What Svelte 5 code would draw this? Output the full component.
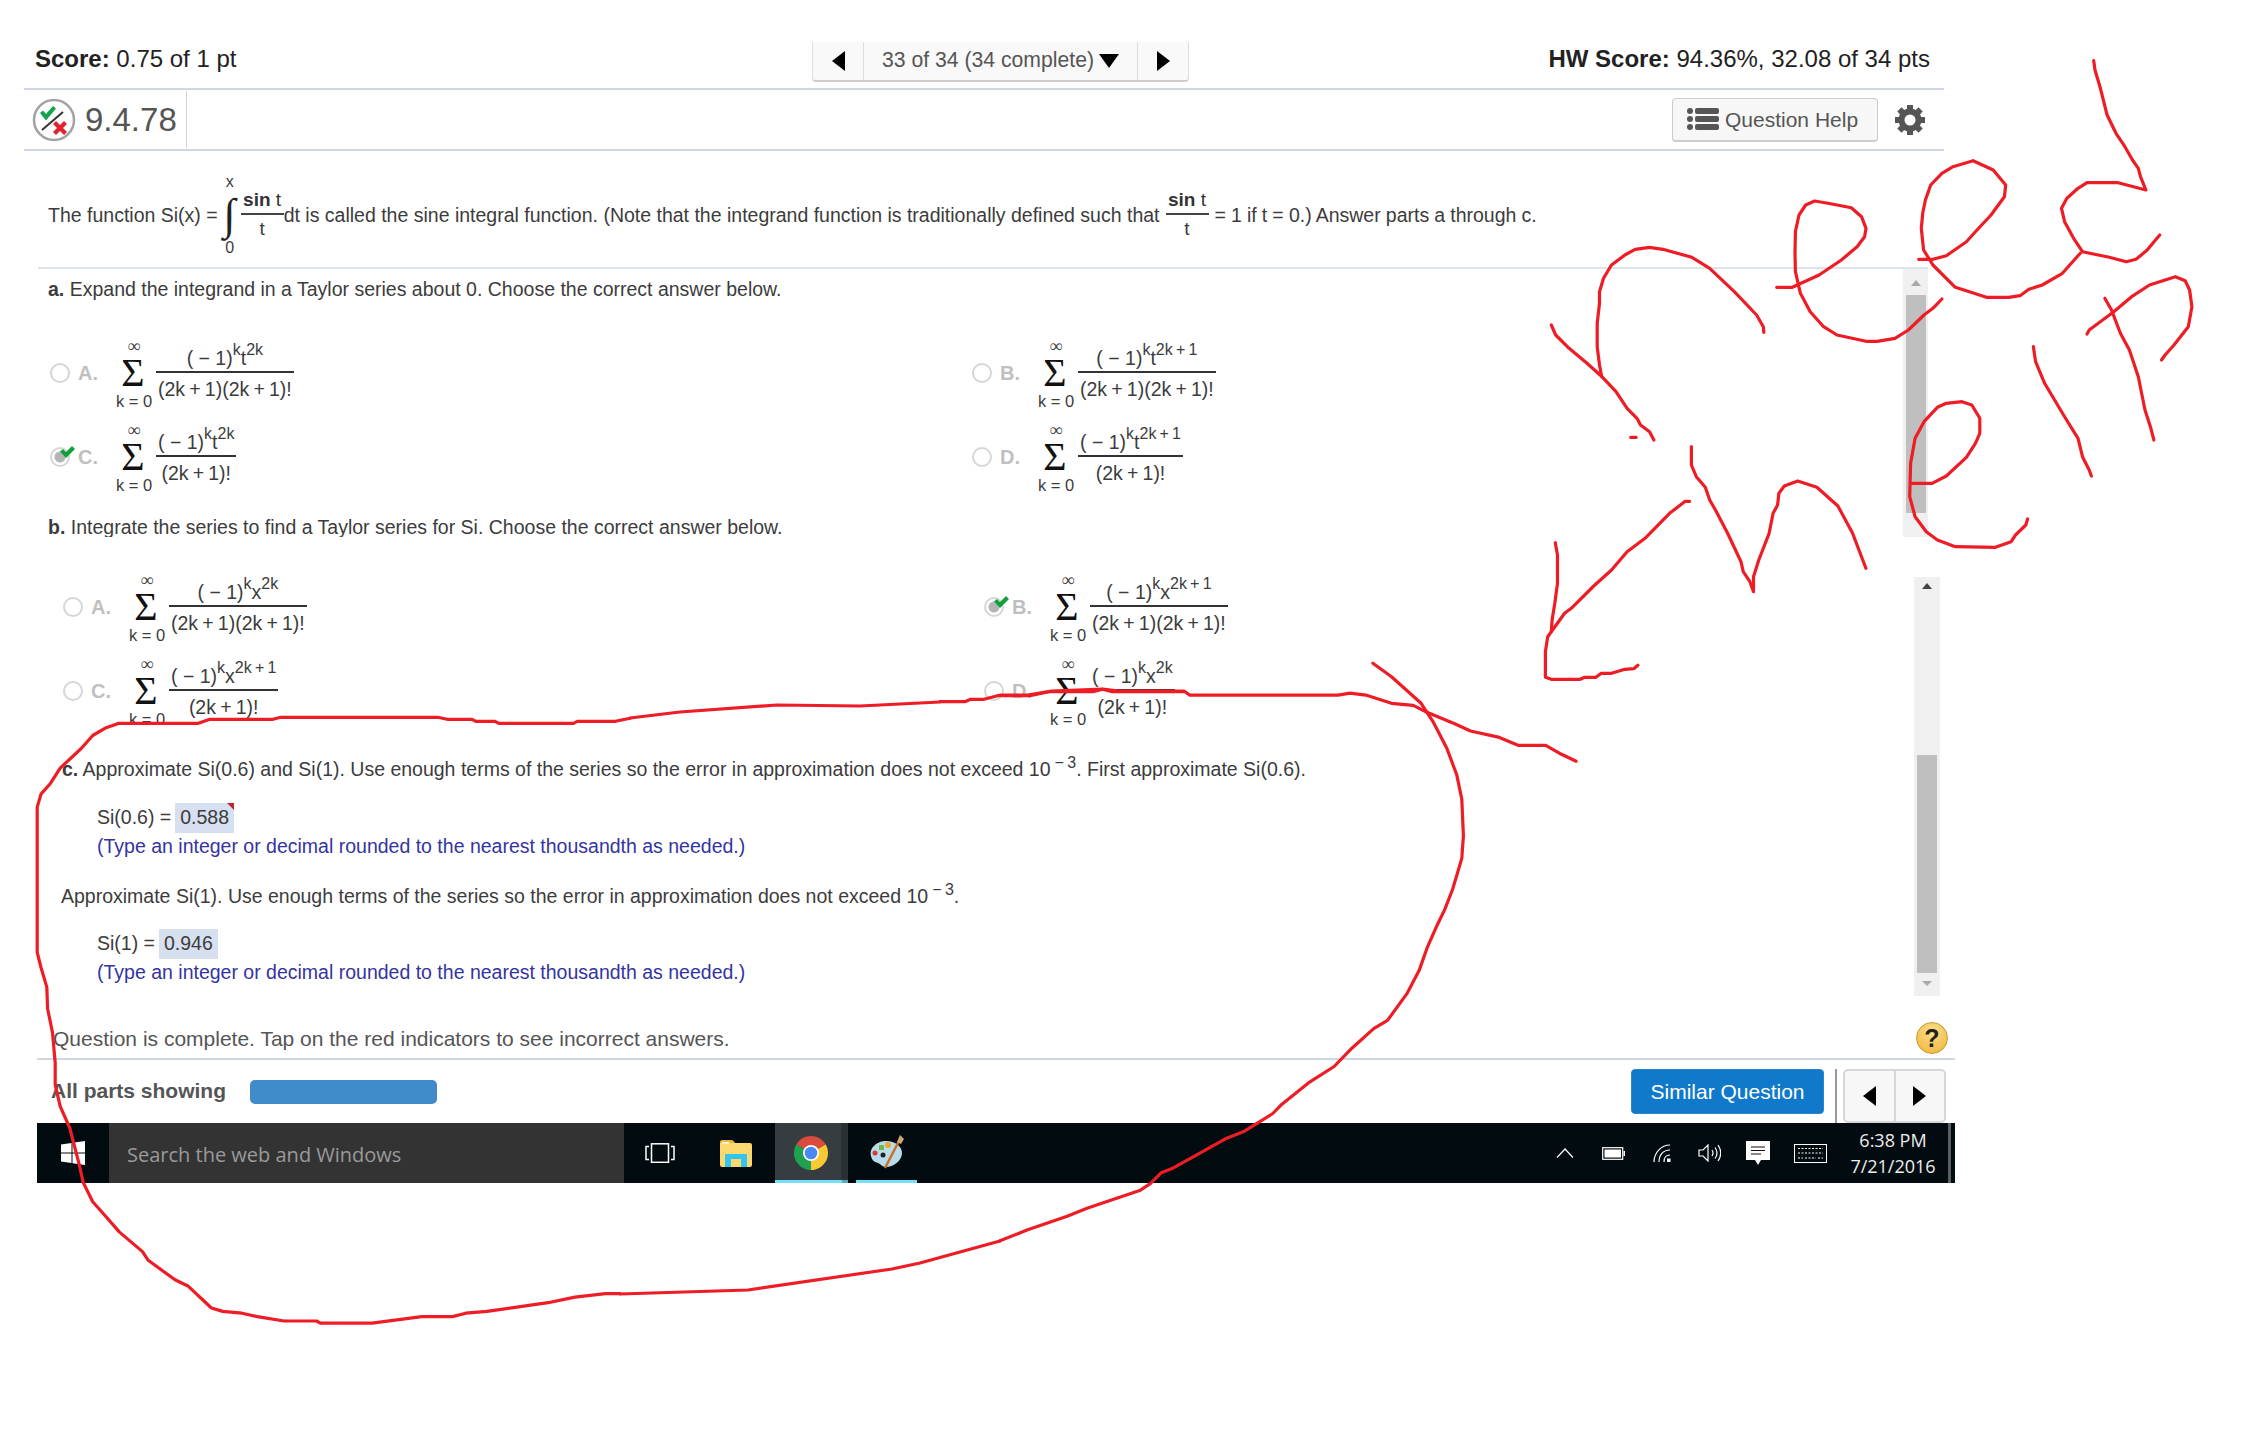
<script>
	const partA = [
		{ key: 'A.', base: 't', exp: '2k', den: '(2k + 1)(2k + 1)!' },
		{ key: 'B.', base: 't', exp: '2k + 1', den: '(2k + 1)(2k + 1)!' },
		{ key: 'C.', base: 't', exp: '2k', den: '(2k + 1)!', picked: true },
		{ key: 'D.', base: 't', exp: '2k + 1', den: '(2k + 1)!' }
	];
	const partB = [
		{ key: 'A.', base: 'x', exp: '2k', den: '(2k + 1)(2k + 1)!' },
		{ key: 'B.', base: 'x', exp: '2k + 1', den: '(2k + 1)(2k + 1)!', picked: true },
		{ key: 'C.', base: 'x', exp: '2k + 1', den: '(2k + 1)!' },
		{ key: 'D.', base: 'x', exp: '2k', den: '(2k + 1)!' }
	];

	// pen strokes, traced from crops: each group has its own origin and x/y scale
	const groups = [
		{
			o: [1520, 40, 2.24, 3],
			lines: [
				[[546,877],[545,860],[530,825],[480,755],[425,685],[385,652],[320,628],[290,622],[258,628],[235,645],[205,675],[187,715],[178,755],[178,790],[173,850],[173,920],[178,975],[183,1010]],
				[[70,855],[80,885],[110,925],[150,970],[185,1012],[215,1055],[240,1105],[262,1135],[270,1155],[290,1175],[300,1200]],
				[[248,1192],[260,1192]],
				[[575,742],[610,742],[670,705],[720,660],[755,620],[772,590],[775,565],[765,530],[742,503],[690,490],[660,483],[640,495],[625,525],[617,575],[616,640],[617,695],[628,760],[650,815],[680,860],[710,885],[775,904],[800,904],[840,895],[870,870],[905,825],[925,805],[945,777]],
				[[893,658],[925,658],[955,647],[1000,605],[1020,575],[1055,525],[1085,470],[1088,435],[1060,390],[1015,362],[970,380],[945,400],[920,435],[908,480],[902,520],[899,565],[904,630],[925,675],[975,742],[1045,772],[1095,772],[1120,767],[1140,748],[1170,735],[1215,700],[1235,670],[1255,640]],
				[[1285,62],[1288,90],[1300,145],[1315,225],[1335,280],[1355,320],[1372,360],[1385,385],[1390,410],[1402,450],[1340,428],[1270,428],[1250,445],[1225,475],[1213,505],[1220,545],[1240,595],[1260,635],[1320,652],[1358,665],[1380,658],[1405,630],[1433,585]],
				[[1270,882],[1275,870],[1330,815],[1370,770],[1410,735],[1468,710],[1490,722],[1500,750],[1505,800],[1497,860],[1465,915],[1445,945],[1437,960]],
				[[1310,775],[1325,810],[1345,880],[1365,930],[1385,1010],[1400,1110],[1412,1160],[1420,1200]],
				[[1150,920],[1155,965],[1175,1030],[1220,1130],[1250,1195],[1260,1250],[1275,1290],[1280,1308]]
			]
		},
		{
			o: [1520, 400, 2.24, 3],
			lines: [
				[[875,250],[923,250],[955,228],[1000,172],[1020,130],[1030,100],[1030,55],[1012,15],[990,5],[955,10],[935,22],[905,65],[885,115],[875,190],[873,290],[885,350],[910,395],[935,420],[975,440],[1065,442],[1100,425],[1110,405],[1133,375],[1137,357]],
				[[384,140],[384,195],[395,230],[415,262],[425,300],[440,335],[465,400],[495,485],[500,515],[515,545],[523,575],[523,530],[535,480],[558,400],[567,340],[577,315],[580,280],[592,258],[622,243],[665,262],[712,318],[745,400],[765,470],[775,505]],
				[[380,304],[370,304],[335,340],[280,415],[240,455],[205,510],[165,558],[115,625],[100,640],[70,695],[62,710],[57,755],[57,832],[70,838],[135,838],[145,832],[170,832],[182,820],[205,820],[235,808],[255,806],[264,796]],
				[[79,428],[84,465],[84,550],[78,610],[72,660],[70,695]]
			]
		},
		{
			o: [1000, 640, 2.529, 2.45],
			lines: [
				[[1457,297],[1420,280],[1380,258],[1310,258],[1260,238],[1190,223],[1150,205],[1075,175],[1045,160],[990,155],[925,135],[885,130],[855,135],[480,135],[465,125],[300,125],[260,120],[130,125],[70,135],[0,135]],
				[[943,57],[990,90],[1065,155],[1095,200],[1130,265],[1155,330],[1168,390],[1172,480],[1168,535],[1145,610],[1125,660],[1105,700],[1080,755],[1060,810],[1030,865],[980,932],[945,952],[890,1000],[845,1045],[780,1085],[710,1140],[690,1160],[615,1205],[570,1222],[510,1255],[435,1295],[408,1305],[380,1332],[355,1348],[220,1392],[170,1412],[70,1445],[0,1472]]
			]
		},
		{
			o: [940, 300, 2.613, 3],
			lines: [
				[[0,1205],[65,1205],[80,1198],[115,1198],[150,1187],[235,1187],[285,1175],[400,1175],[425,1168],[450,1175],[635,1175]]
			]
		},
		{
			o: [30, 300, 2.613, 3],
			lines: [
				[[230,1270],[440,1270],[470,1258],[635,1258],[655,1252],[1065,1252],[1090,1258],[1155,1258],[1165,1264],[1215,1264],[1225,1270],[1420,1270],[1430,1264],[1530,1264],[1568,1255]]
			]
		},
		{
			o: [20, 690, 2.613, 2.306],
			lines: [
				[[255,78],[225,87],[190,105],[160,135],[105,180],[80,215],[55,240],[45,270],[45,605],[55,640],[70,685],[72,735],[85,790],[92,860],[92,910],[105,960],[130,1010],[155,1095],[165,1135],[190,1180],[215,1205],[260,1250],[320,1295],[335,1315],[405,1360],[440,1375],[500,1425],[530,1433],[580,1437],[620,1445],[690,1455],[775,1455],[785,1460],[920,1460],[1050,1445],[1130,1445],[1165,1437],[1220,1433],[1380,1413],[1450,1400],[1530,1392],[1568,1392]]
			]
		},
		{
			o: [0, 0, 1, 1],
			lines: [
				[[630,718],[680,712],[777,705],[860,706],[940,702]],
				[[620,1294],[748,1290],[892,1269],[920,1263],[1000,1241]]
			]
		}
	];

	const ink = groups.flatMap((g) =>
		g.lines.map((l) =>
			l.map(([x, y]) => `${(g.o[0] + x / g.o[2]).toFixed(1)},${(g.o[1] + y / g.o[3]).toFixed(1)}`).join(' ')
		)
	);
	const teeth = [0, 45, 90, 135, 180, 225, 270, 315];
</script>

{#snippet option(o)}
	<div class="option">
		<div class="pick">
			<span class="radio" class:on={o.picked}></span>
			{#if o.picked}
				<svg class="tick" viewBox="0 0 15 12" width="15" height="12"><path d="M0 5.500L3 3l3 3 6-6 3 3-9 9z" fill="#12a03c" /></svg>
			{/if}
			<span class="letter">{o.key}</span>
		</div>
		<div class="sigma">
			<span class="inf">∞</span>
			<span class="sum">Σ</span>
			<span class="from">k = 0</span>
		</div>
		<div class="frac">
			<div class="num">( − 1)<sup>k</sup>{o.base}<sup>{o.exp}</sup></div>
			<div class="den">{o.den}</div>
		</div>
	</div>
{/snippet}

{#snippet scrollbar(kind)}
	<div class="scroll {kind}">
		<span class="up"></span>
		<span class="thumb"></span>
		<span class="down"></span>
	</div>
{/snippet}

<div class="page">
	<header class="top-row">
		<div class="score"><b>Score:</b> 0.75 of 1 pt</div>
		<div class="pager">
			<span class="cell arrow"><i class="tri left"></i></span>
			<span class="cell count">33 of 34 (34 complete)<i class="tri down"></i></span>
			<span class="cell arrow"><i class="tri right"></i></span>
		</div>
		<div class="hw"><b>HW Score:</b> 94.36%, 32.08 of 34 pts</div>
	</header>

	<div class="title-row">
		<svg class="status" viewBox="0 0 44 44" width="44" height="44">
			<circle cx="22" cy="22" r="20" fill="#fff" stroke="#a2a2a2" stroke-width="2.500" />
			<path d="M10 32L31 14" stroke="#333" stroke-width="2" />
			<path d="M8 15l3-2.500 3 3.500 7-8 3 2.500-10 12z" fill="#12a44a" />
			<path d="M21 26l3-3 4 4 4-4 3 3-4 4 4 4-3 3-4-4-4 4-3-3 4-4z" fill="#e0232e" />
		</svg>
		<span class="section">9.4.78</span>
		<span class="title-rule"></span>
		<button class="help">
			<svg viewBox="0 0 32 22" width="32" height="22" fill="#555">
				<circle cx="3" cy="3" r="3" /><circle cx="3" cy="11" r="3" /><circle cx="3" cy="19" r="3" />
				<rect x="8" y="0" width="24" height="6" rx="2" /><rect x="8" y="8" width="24" height="6" rx="2" /><rect x="8" y="16" width="24" height="6" rx="2" />
			</svg>
			<span>Question Help</span>
		</button>
		<svg class="gear" viewBox="0 0 30 30" width="30" height="30">
			{#each teeth as a}
				<rect x="12" y="0" width="6" height="7" fill="#555" transform="rotate({a} 15 15)" />
			{/each}
			<circle cx="15" cy="15" r="8.500" fill="none" stroke="#555" stroke-width="6" />
		</svg>
	</div>

	<div class="prompt">
		<span>The function Si(x) =</span>
		<span class="integral"><small>x</small><em>∫</em><small>0</small></span>
		<span class="inline-frac"><span class="top"><b>sin</b> t</span><span class="bot">t</span></span>
		<span>dt is called the sine integral function. (Note that the integrand function is traditionally defined such that</span>
		<span class="inline-frac spaced"><span class="top"><b>sin</b> t</span><span class="bot">t</span></span>
		<span class="tail">= 1 if t = 0.) Answer parts a through c.</span>
	</div>

	<section class="pane first">
		<div class="pane-body">
			<p class="lead"><b>a.</b> Expand the integrand in a Taylor series about 0. Choose the correct answer below.</p>
			<div class="options">
				{#each partA as o}{@render option(o)}{/each}
			</div>
			<p class="lead second"><b>b.</b> Integrate the series to find a Taylor series for Si. Choose the correct answer below.</p>
		</div>
		{@render scrollbar('light')}
	</section>

	<section class="pane lower">
		<div class="pane-body">
			<div class="options shifted">
				{#each partB as o}{@render option(o)}{/each}
			</div>
			<div class="part-c">
				<p class="line c-line"><b>c.</b> Approximate Si(0.6) and Si(1). Use enough terms of the series so the error in approximation does not exceed 10<sup class="pow">− 3</sup>. First approximate Si(0.6).</p>
				<div class="answer first-answer">Si(0.6) = <span class="field wrong">0.588</span></div>
				<p class="hint">(Type an integer or decimal rounded to the nearest thousandth as needed.)</p>
				<p class="line again">Approximate Si(1). Use enough terms of the series so the error in approximation does not exceed 10<sup class="pow">− 3</sup>.</p>
				<div class="answer">Si(1) = <span class="field">0.946</span></div>
				<p class="hint">(Type an integer or decimal rounded to the nearest thousandth as needed.)</p>
			</div>
		</div>
		{@render scrollbar('dark')}
	</section>

	<div class="status-row">
		<span>Question is complete. Tap on the red indicators to see incorrect answers.</span>
		<span class="qmark">?</span>
	</div>

	<div class="action-row">
		<b class="parts">All parts showing</b>
		<span class="progress"></span>
		<div class="actions">
			<button class="similar">Similar Question</button>
			<span class="sep"></span>
			<div class="pair">
				<span><i class="tri left"></i></span>
				<span><i class="tri right"></i></span>
			</div>
		</div>
	</div>

	<footer class="taskbar">
		<div class="start">
			<svg viewBox="0 0 24 24" width="24" height="24" fill="#fff">
				<path d="M0 3.500L10.500 2V11.500H0zM11.500 1.800L24 0V11.500H11.500zM0 12.500H10.500V22L0 20.500zM11.500 12.500H24V24L11.500 22.200z" />
			</svg>
		</div>
		<div class="search">Search the web and Windows</div>
		<div class="app view">
			<svg viewBox="0 0 30 20" width="30" height="20" fill="none" stroke="#fff" stroke-width="1.500">
				<rect x="6.500" y="0.800" width="17" height="18.500" />
				<path d="M4 3.500H1V16.500H4M26 3.500H29V16.500H26" />
			</svg>
		</div>
		<div class="app files">
			<svg viewBox="0 0 32 27" width="32" height="27">
				<path d="M0 3q0-3 3-3h9l3 3h15q2 0 2 2v20q0 2-2 2H2q-2 0-2-2z" fill="#fbd96f" />
				<path d="M0 3q0-3 3-3h9l3 3H0z" fill="#e9b93f" />
				<rect x="2" y="2" width="7" height="1.500" fill="#fff" />
				<path d="M5 14h22v13h-6v-8H11v8H5z" fill="#33c4ef" />
			</svg>
		</div>
		<div class="app chrome">
			<svg viewBox="0 0 34 34" width="34" height="34">
				<path d="M17 17L2.300 8.500A17 17 0 0 1 31.700 8.500z" fill="#d84b3e" />
				<path d="M17 17L2.300 8.500A17 17 0 0 0 17 34z" fill="#20a152" />
				<path d="M17 17L31.700 8.500A17 17 0 0 1 17 34z" fill="#fbc933" />
				<circle cx="17" cy="17" r="8" fill="#fff" />
				<circle cx="17" cy="17" r="6.300" fill="#4a89f3" />
			</svg>
		</div>
		<div class="app paint">
			<svg viewBox="0 0 36 34" width="36" height="34">
				<path d="M2 21C0 12 9 6 17 6c9 0 16 5 16 12 0 8-9 14-16 14-4 0-5-3-8-4-3-1-6-2-7-7z" fill="#b9dcea" />
				<circle cx="6" cy="18" r="2.500" fill="#d33b32" />
				<rect x="10" y="10" width="5" height="5" fill="#71b94a" />
				<circle cx="19" cy="10" r="3" fill="#efa62e" />
				<circle cx="14" cy="20" r="2.500" fill="#1c2226" />
				<path d="M16 33L30 6" stroke="#c9702a" stroke-width="2.500" />
				<path d="M28 7L31 0l4 4-3 5z" fill="#cfa772" />
			</svg>
		</div>

		<div class="tray">
			<span class="slot w48">
				<svg viewBox="0 0 18 10" width="18" height="10" fill="none" stroke="#fff" stroke-width="1.200"><path d="M1 9.500L9 1l8 8.500" /></svg>
			</span>
			<span class="slot w48">
				<svg viewBox="0 0 23 13" width="23" height="13" fill="none" stroke="#fff"><rect x="0.700" y="0.700" width="20" height="11.600" stroke-width="1.200" /><rect x="2.500" y="2.500" width="16.500" height="8" fill="#fff" stroke="none" /><rect x="21.500" y="4" width="1.500" height="5" fill="#fff" stroke="none" /></svg>
			</span>
			<span class="slot w49">
				<svg viewBox="0 0 18 18" width="18" height="18" fill="none" stroke="#fff" stroke-width="1.200"><path d="M1 18C1 9 8 1 17 1M6 18C6 11 10 6 17 6M11 18C11 14 13 11 17 11" /><rect x="14" y="14.500" width="3.500" height="3.500" fill="#fff" stroke="none" /></svg>
			</span>
			<span class="slot w47">
				<svg viewBox="0 0 23 18" width="23" height="18" fill="none" stroke="#fff" stroke-width="1.200"><path d="M1 6H5L10 1V17L5 12H1zM14 6Q16 9 14 12M17 3.500Q21 9 17 14.500M20 1Q25.500 9 20 17" /></svg>
			</span>
			<span class="slot w50">
				<svg viewBox="0 0 24 24" width="24" height="24"><path d="M0 0H24V19H15L12 24 9 19H0z" fill="#fff" /><path d="M5 6H19M5 9.500H19M5 13H15" stroke="#111" stroke-width="1.200" /></svg>
			</span>
			<span class="slot w54">
				<svg viewBox="0 0 33 19" width="33" height="19" fill="none" stroke="#fff" stroke-width="1"><rect x="0.500" y="0.500" width="32" height="18" /><path d="M4 4.500H29M4 9H29M4 14H9M11 14H22M24 14H29" stroke-dasharray="2 1.500" /></svg>
			</span>
			<span class="clock"><span>6:38 PM</span><span>7/21/2016</span></span>
			<span class="sliver"></span>
		</div>
	</footer>

	<svg class="ink" viewBox="0 0 2256 1448" width="2256" height="1448">
		{#each ink as pts}
			<polyline points={pts} />
		{/each}
	</svg>
</div>

<style>
	:global(body) {
		margin: 0;
		background: #fff;
	}

	.page {
		position: relative;
		width: 2256px;
		height: 1448px;
		overflow: hidden;
		background: #fff;
		color: #3c3c3c;
		font-family: 'Liberation Sans', Arial, sans-serif;
		font-size: 19.500px;
	}

	p {
		margin: 0;
	}

	/* top bar */
	.top-row {
		display: grid;
		grid-template-columns: 788px 377px 1fr;
		box-sizing: border-box;
		margin-left: 24px;
		width: 1920px;
		height: 90px;
		padding-top: 42px;
		border-bottom: 2px solid #ced6e4;
		font-size: 24px;
		line-height: 34px;
		color: #222;
	}

	.score {
		padding-left: 11px;
	}

	.hw {
		text-align: right;
		padding-right: 14px;
	}

	.pager {
		display: flex;
		height: 40px;
		box-sizing: border-box;
		border: 1px solid #ddd;
		border-top: none;
		border-bottom: 2px solid #ccc;
		border-radius: 0 0 4px 4px;
		background: #f9f9f9;
		font-size: 21.200px;
		color: #555;
	}

	.cell {
		display: flex;
		align-items: center;
		justify-content: center;
	}

	.cell.arrow {
		width: 50px;
	}

	.cell.count {
		flex: 1;
		padding-bottom: 3px;
		gap: 5px;
		border-left: 1px solid #ddd;
		border-right: 1px solid #ddd;
		white-space: nowrap;
	}

	.tri {
		display: inline-block;
		width: 0;
		height: 0;
		border-style: solid;
		border-color: transparent;
	}

	.tri.left {
		border-width: 10px 13px 10px 0;
		border-right-color: #000;
	}

	.tri.right {
		border-width: 10px 0 10px 13px;
		border-left-color: #000;
	}

	.tri.down {
		border-width: 14px 10px 0;
		border-top-color: #000;
		margin-top: 3px;
	}

	/* section title */
	.title-row {
		display: flex;
		align-items: center;
		box-sizing: border-box;
		margin-left: 24px;
		width: 1920px;
		height: 61px;
		padding-left: 8px;
		border-bottom: 2px solid #ced6e4;
	}

	.section {
		margin-left: 9px;
		font-size: 33px;
		color: #555;
	}

	.title-rule {
		align-self: stretch;
		width: 1px;
		margin: 1px 0 1px 9px;
		background: #ced6e4;
	}

	.help {
		display: flex;
		align-items: center;
		gap: 6px;
		box-sizing: border-box;
		width: 206px;
		height: 44px;
		margin-left: auto;
		padding: 0 0 0 14px;
		border: 1px solid #ccc;
		border-bottom-width: 2px;
		border-radius: 4px;
		background: #f7f7f7;
		color: #555;
		font: 21px 'Liberation Sans', Arial, sans-serif;
	}

	.help span {
		padding-top: 2px;
	}

	.gear {
		margin: 0 19px 0 17px;
	}

	/* question text */
	.prompt {
		display: flex;
		align-items: center;
		box-sizing: border-box;
		margin-left: 38px;
		width: 1890px;
		height: 118px;
		padding: 12px 0 0 10px;
		border-bottom: 2px solid #dfe3ea;
		white-space: nowrap;
	}

	.tail {
		word-spacing: -0.300px;
	}

	.integral {
		display: flex;
		flex-direction: column;
		align-items: center;
		width: 22px;
		margin: 0 0 0 1px;
	}

	.integral small {
		font-size: 16px;
		line-height: 20px;
	}

	.integral em {
		height: 46px;
		font: 44px/46px 'Liberation Serif', serif;
		font-style: normal;
		color: #222;
	}

	.inline-frac {
		display: inline-flex;
		flex-direction: column;
		text-align: center;
		min-width: 43px;
		font-size: 19px;
	}

	.inline-frac.spaced {
		margin: 0 6px;
	}

	.inline-frac .top {
		padding-bottom: 1px;
		border-bottom: 2px solid #444;
		line-height: 25px;
		color: #333;
	}

	.inline-frac .bot {
		line-height: 28px;
	}

	/* scrolling panes */
	.pane {
		display: flex;
		margin-left: 38px;
		overflow: hidden;
	}

	.pane.first {
		width: 1890px;
		height: 268px;
	}

	.pane.lower {
		width: 1902px;
		height: 419px;
		margin-top: 40px;
	}

	.pane-body {
		flex: 1;
		min-width: 0;
	}

	.first .pane-body {
		padding-left: 10px;
	}

	.lead {
		line-height: 40px;
	}

	.lead.second {
		margin-top: 8px;
	}

	.options {
		display: grid;
		grid-template-columns: 922px 1fr;
		grid-auto-rows: 84px;
		margin-top: 22px;
		padding-left: 2px;
	}

	.options.shifted {
		margin-top: -12px;
		padding-left: 25px;
		grid-template-columns: 921px 1fr;
	}

	.option {
		display: flex;
		align-items: center;
	}

	.pick {
		position: relative;
		display: flex;
		align-items: center;
		width: 67px;
		height: 24px;
	}

	.radio {
		box-sizing: border-box;
		width: 20px;
		height: 20px;
		border: 2.500px solid #d6d6d6;
		border-radius: 50%;
	}

	.radio.on {
		background: radial-gradient(circle, #b5b5b5 5px, #fff 6px);
	}

	.tick {
		position: absolute;
		left: 10px;
		top: 1px;
	}

	.letter {
		margin-left: 8px;
		font-size: 20px;
		font-weight: bold;
		color: #bfbfbf;
	}

	.sigma {
		display: flex;
		flex-direction: column;
		align-items: center;
		width: 34px;
		margin-right: 5px;
		line-height: 1;
	}

	.inf {
		height: 18px;
		font: 18px/20px 'Liberation Serif', serif;
		color: #444;
	}

	.sum {
		height: 38px;
		margin-left: -2px;
		font: 40px/38px 'Liberation Serif', serif;
		color: #111;
	}

	.from {
		height: 18px;
		font-size: 16.500px;
		line-height: 18px;
		white-space: nowrap;
	}

	.frac {
		display: flex;
		flex-direction: column;
		align-items: stretch;
		text-align: center;
		white-space: nowrap;
	}

	.num {
		height: 30px;
		padding: 0 2px;
		line-height: 31px;
		border-bottom: 2px solid #333;
		box-sizing: border-box;
	}

	.num sup {
		font-size: 16px;
		word-spacing: -1.250px;
		line-height: 0;
		vertical-align: 10px;
	}

	.den {
		height: 30px;
		padding: 0 2px;
		line-height: 32px;
		word-spacing: -1.250px;
	}

	.part-c {
		padding-left: 24px;
	}

	.line {
		height: 30px;
		line-height: 30px;
		white-space: nowrap;
	}

	.c-line {
		margin-top: 21px;
	}

	.pow {
		font-size: 16px;
		word-spacing: -1px;
		line-height: 0;
		vertical-align: 8px;
		margin-left: 4px;
	}

	.again {
		margin: 21px 0 0 -1px;
	}

	.answer {
		display: flex;
		align-items: flex-start;
		gap: 4px;
		height: 30px;
		margin: 18px 0 0 35px;
		line-height: 28px;
	}

	.first-answer {
		margin-top: 19px;
	}

	.field {
		position: relative;
		padding: 0 5px 2px;
		line-height: 28px;
		background: #d6e0f0;
	}

	.field.wrong::after {
		content: '';
		position: absolute;
		top: 0;
		right: 0;
		border-top: 7px solid #c1222b;
		border-left: 7px solid transparent;
	}

	.hint {
		margin: 0 0 1px 35px;
		line-height: 27px;
		color: #34349f;
	}

	.scroll {
		display: flex;
		flex-direction: column;
		align-items: center;
		flex: none;
		background: #f0f0f0;
	}

	.scroll.light {
		width: 25px;
	}

	.scroll.dark {
		width: 26px;
	}

	.scroll .thumb {
		width: 20px;
		background: #bfbfbf;
	}

	.scroll.light .thumb {
		height: 218px;
		margin-top: 9px;
	}

	.scroll.dark .thumb {
		height: 218px;
		margin-top: 166px;
	}

	.up,
	.down {
		flex: none;
		width: 0;
		height: 0;
		border-left: 5px solid transparent;
		border-right: 5px solid transparent;
	}

	.up {
		margin-top: 11px;
		border-bottom: 6px solid #aaa;
	}

	.scroll.dark .up {
		margin-top: 6px;
		border-bottom-color: #444;
	}

	.down {
		margin-top: 8px;
		border-top: 5px solid #aaa;
	}

	.scroll.light .down {
		display: none;
	}

	/* footer */
	.status-row {
		display: flex;
		align-items: center;
		box-sizing: border-box;
		margin-left: 37px;
		width: 1918px;
		height: 64px;
		padding: 24px 0 0 16px;
		border-bottom: 2px solid #ced6e4;
		font-size: 21px;
		color: #555;
	}

	.qmark {
		box-sizing: border-box;
		width: 32px;
		height: 32px;
		margin: -2px 7px 0 auto;
		border-radius: 50%;
		border: 1px solid #c79a30;
		background: radial-gradient(circle at 50% 30%, #fde08a, #eeb236);
		text-align: center;
		font-size: 25px;
		font-weight: bold;
		line-height: 30px;
		color: #222;
	}

	.action-row {
		display: flex;
		box-sizing: border-box;
		margin-left: 37px;
		width: 1918px;
		height: 63px;
		padding: 9px 9px 0 14px;
	}

	.parts {
		font-size: 21px;
		line-height: 43px;
		color: #555;
	}

	.progress {
		width: 187px;
		height: 24px;
		margin: 11px 0 0 24px;
		border-radius: 5px;
		background: #428bca;
	}

	.actions {
		display: flex;
		margin-left: auto;
	}

	.similar {
		width: 193px;
		height: 45px;
		padding: 1px 0 0;
		border: 1px solid #2a86cf;
		border-radius: 4px;
		background: #1079ca;
		color: #fff;
		font: 21px 'Liberation Sans', Arial, sans-serif;
	}

	.sep {
		width: 2px;
		margin: 0 6px 0 11px;
		background: #999;
	}

	.pair {
		display: flex;
		box-sizing: border-box;
		width: 103px;
		border: 2px solid #d6d6d6;
		border-radius: 5px;
		background: #f7f7f7;
	}

	.pair span {
		flex: 1;
		display: flex;
		align-items: center;
		justify-content: center;
	}

	.pair span + span {
		border-left: 2px solid #d6d6d6;
	}

	.taskbar {
		display: flex;
		align-items: stretch;
		margin-left: 37px;
		width: 1918px;
		height: 60px;
		background: #020c10;
		color: #fff;
		font-family: 'Open Sans', 'Noto Sans', sans-serif;
	}

	.start {
		display: flex;
		align-items: center;
		justify-content: center;
		width: 72px;
	}

	.search {
		display: flex;
		align-items: center;
		box-sizing: border-box;
		width: 515px;
		padding: 2px 0 0 18px;
		background: #333;
		color: #9a9a9a;
		font-size: 20px;
	}

	.app {
		display: flex;
		align-items: center;
		justify-content: center;
		box-sizing: border-box;
	}

	.app.view {
		width: 72px;
	}

	.app.files {
		width: 79px;
	}

	.app.chrome {
		width: 73px;
		padding: 2px 1px 0 0;
		background: linear-gradient(90deg, #353d40 66px, #2a3033 66px);
		border-bottom: 3px solid;
		border-image: linear-gradient(90deg, #76e0fa 66px, #5ba8bf 66px) 1;
	}

	.app.paint {
		width: 61px;
		margin-left: 8px;
		padding-top: 1px;
		border-bottom: 3px solid #76e0fa;
	}

	.tray {
		display: flex;
		align-items: center;
		margin-left: auto;
	}

	.slot {
		display: flex;
		justify-content: center;
	}

	.w47 { width: 47px; }
	.w48 { width: 48px; }
	.w49 { width: 49px; }
	.w50 { width: 50px; }
	.w54 { width: 54px; }

	.clock {
		display: flex;
		flex-direction: column;
		align-items: center;
		width: 110px;
		padding-left: 1px;
		font-size: 18px;
		line-height: 26px;
		color: #eee;
	}

	.sliver {
		align-self: stretch;
		width: 3px;
		margin-right: 4px;
		background: #5a6062;
	}

	.ink {
		position: absolute;
		inset: 0;
		fill: none;
		stroke: #ee1c25;
		stroke-width: 3.200;
		stroke-linejoin: round;
		stroke-linecap: round;
		pointer-events: none;
	}
</style>
